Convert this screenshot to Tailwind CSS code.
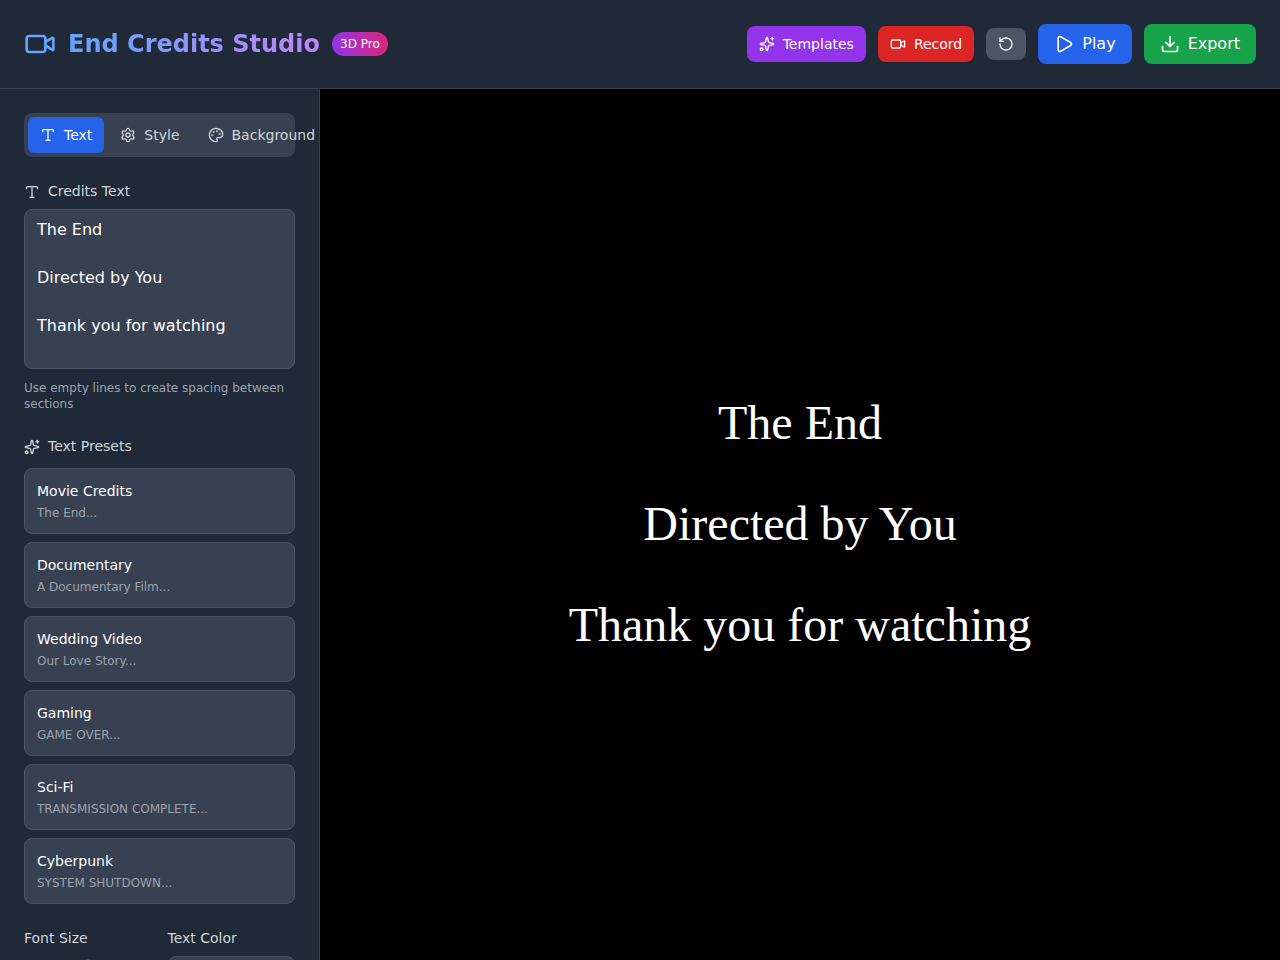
<!DOCTYPE html>
<html lang="en">
<head>
  <meta charset="UTF-8">
  <meta name="viewport" content="width=device-width, initial-scale=1.0">
  <title>End Credits Studio</title>
  <script src="https://cdn.jsdelivr.net/npm/@tailwindcss/browser@4"></script>
</head>
<body class="h-screen flex flex-col overflow-hidden bg-[#111827] text-white font-['DejaVu_Sans',sans-serif]">

  <!-- shared icons -->
  <svg class="hidden" aria-hidden="true">
    <symbol id="icon-video" viewBox="0 0 24 24">
      <path d="m16 13 5.223 3.482a.5.5 0 0 0 .777-.416V7.87a.5.5 0 0 0-.752-.432L16 10.5"/>
      <rect x="2" y="6" width="14" height="12" rx="2"/>
    </symbol>
    <symbol id="icon-sparkles" viewBox="0 0 24 24">
      <path d="M11.017 2.814a1 1 0 0 1 1.966 0l1.051 5.558a2 2 0 0 0 1.594 1.594l5.558 1.051a1 1 0 0 1 0 1.966l-5.558 1.051a2 2 0 0 0-1.594 1.594l-1.051 5.558a1 1 0 0 1-1.966 0l-1.051-5.558a2 2 0 0 0-1.594-1.594l-5.558-1.051a1 1 0 0 1 0-1.966l5.558-1.051a2 2 0 0 0 1.594-1.594z"/>
      <path d="M20 2v4"/>
      <path d="M22 4h-4"/>
      <circle cx="4" cy="20" r="2"/>
    </symbol>
    <symbol id="icon-type" viewBox="0 0 24 24">
      <path d="M12 4v16"/>
      <path d="M4 7V5a1 1 0 0 1 1-1h14a1 1 0 0 1 1 1v2"/>
      <path d="M9 20h6"/>
    </symbol>
  </svg>

  <!-- Header -->
  <header class="flex items-center justify-between p-6 bg-[#1f2937] border-b border-[#374151]">
    <div class="flex items-center gap-3">
      <svg class="w-8 h-8 text-[#60a5fa]" fill="none" stroke="currentColor" stroke-width="2" stroke-linecap="round" stroke-linejoin="round"><use href="#icon-video"/></svg>
      <h1 class="text-2xl font-bold bg-linear-to-r/srgb from-[#60a5fa] to-[#c084fc] bg-clip-text text-transparent">End Credits Studio</h1>
      <span class="px-2 py-1 rounded-full text-xs bg-linear-to-r/srgb from-[#9333ea] to-[#db2777]">3D Pro</span>
    </div>

    <div class="flex items-center gap-3">
      <button type="button" class="flex items-center gap-2 px-3 py-2 rounded-lg text-sm bg-[#9333ea] hover:bg-[#7e22ce]">
        <svg class="w-4 h-4" fill="none" stroke="currentColor" stroke-width="2" stroke-linecap="round" stroke-linejoin="round"><use href="#icon-sparkles"/></svg>
        Templates
      </button>
      <button type="button" class="flex items-center gap-2 px-3 py-2 rounded-lg text-sm bg-[#dc2626] hover:bg-[#b91c1c]">
        <svg class="w-4 h-4" fill="none" stroke="currentColor" stroke-width="2" stroke-linecap="round" stroke-linejoin="round"><use href="#icon-video"/></svg>
        Record
      </button>
      <button type="button" aria-label="Reset" class="px-3 py-2 rounded-lg bg-[#4b5563] hover:bg-[#374151]">
        <svg class="w-4 h-4" viewBox="0 0 24 24" fill="none" stroke="currentColor" stroke-width="2" stroke-linecap="round" stroke-linejoin="round">
          <path d="M3 12a9 9 0 1 0 9-9 9.75 9.75 0 0 0-6.74 2.74L3 8"/>
          <path d="M3 3v5h5"/>
        </svg>
      </button>
      <button type="button" class="flex items-center gap-2 px-4 py-2 rounded-lg bg-[#2563eb] hover:bg-[#1d4ed8]">
        <svg class="w-5 h-5" viewBox="0 0 24 24" fill="none" stroke="currentColor" stroke-width="2" stroke-linecap="round" stroke-linejoin="round">
          <path d="M5 5a2 2 0 0 1 3.008-1.728l11.997 6.998a2 2 0 0 1 .003 3.458l-12 7A2 2 0 0 1 5 19z"/>
        </svg>
        Play
      </button>
      <button type="button" class="flex items-center gap-2 px-4 py-2 rounded-lg bg-[#16a34a] hover:bg-[#15803d]">
        <svg class="w-5 h-5" viewBox="0 0 24 24" fill="none" stroke="currentColor" stroke-width="2" stroke-linecap="round" stroke-linejoin="round">
          <path d="M12 15V3"/>
          <path d="M21 15v4a2 2 0 0 1-2 2H5a2 2 0 0 1-2-2v-4"/>
          <path d="m7 10 5 5 5-5"/>
        </svg>
        Export
      </button>
    </div>
  </header>

  <div class="flex flex-1 min-h-0">
    <!-- Sidebar -->
    <aside class="w-80 shrink-0 p-6 space-y-6 bg-[#1f2937] border-r border-[#374151] overflow-x-hidden overflow-y-auto [scrollbar-width:none]">
      <nav class="flex gap-1 p-1 rounded-lg bg-[#374151] text-sm text-[#d1d5db]">
        <button type="button" class="flex flex-1 items-center gap-2 px-3 py-2 rounded-md bg-[#2563eb] text-white">
          <svg class="w-4 h-4 shrink-0" fill="none" stroke="currentColor" stroke-width="2" stroke-linecap="round" stroke-linejoin="round"><use href="#icon-type"/></svg>
          Text
        </button>
        <button type="button" class="flex flex-1 items-center gap-2 px-3 py-2 rounded-md hover:text-white">
          <svg class="w-4 h-4 shrink-0" viewBox="0 0 24 24" fill="none" stroke="currentColor" stroke-width="2" stroke-linecap="round" stroke-linejoin="round">
            <path d="M9.671 4.136a2.34 2.34 0 0 1 4.659 0 2.34 2.34 0 0 0 3.319 1.915 2.34 2.34 0 0 1 2.33 4.033 2.34 2.34 0 0 0 0 3.831 2.34 2.34 0 0 1-2.33 4.033 2.34 2.34 0 0 0-3.319 1.915 2.34 2.34 0 0 1-4.659 0 2.34 2.34 0 0 0-3.32-1.915 2.34 2.34 0 0 1-2.33-4.033 2.34 2.34 0 0 0 0-3.831A2.34 2.34 0 0 1 6.35 6.051a2.34 2.34 0 0 0 3.319-1.915"/>
            <circle cx="12" cy="12" r="3"/>
          </svg>
          Style
        </button>
        <button type="button" class="flex flex-1 items-center gap-2 px-3 py-2 rounded-md hover:text-white">
          <svg class="w-4 h-4 shrink-0" viewBox="0 0 24 24" fill="none" stroke="currentColor" stroke-width="2" stroke-linecap="round" stroke-linejoin="round">
            <path d="M12 22a1 1 0 0 1 0-20 10 9 0 0 1 10 9 5 5 0 0 1-5 5h-2.25a1.75 1.75 0 0 0-1.4 2.8l.3.4a1.75 1.75 0 0 1-1.4 2.8z"/>
            <circle cx="13.5" cy="6.5" r=".5" fill="currentColor"/>
            <circle cx="17.5" cy="10.5" r=".5" fill="currentColor"/>
            <circle cx="6.5" cy="12.5" r=".5" fill="currentColor"/>
            <circle cx="8.5" cy="7.5" r=".5" fill="currentColor"/>
          </svg>
          Background
        </button>
      </nav>

      <div>
        <label for="credits" class="block mb-2 text-sm text-[#d1d5db]"><svg class="inline w-4 h-4 mr-2" fill="none" stroke="currentColor" stroke-width="2" stroke-linecap="round" stroke-linejoin="round"><use href="#icon-type"/></svg>Credits Text</label>
        <textarea id="credits" class="w-full h-40 px-3 py-2 rounded-lg bg-[#374151] border border-[#4b5563] text-white resize-none">The End

Directed by You

Thank you for watching</textarea>
        <p class="mt-1 text-xs text-[#9ca3af]">Use empty lines to create spacing between sections</p>
      </div>

      <div>
        <h2 class="mb-3 text-sm text-[#d1d5db]"><svg class="inline w-4 h-4 mr-2" fill="none" stroke="currentColor" stroke-width="2" stroke-linecap="round" stroke-linejoin="round"><use href="#icon-sparkles"/></svg>Text Presets</h2>
        <div id="presets" class="grid gap-2"></div>
      </div>

      <div class="grid grid-cols-2 gap-4">
        <div>
          <label for="font-size" class="block mb-2 text-sm text-[#d1d5db]">Font Size</label>
          <input type="range" id="font-size" min="24" max="72" value="48" class="block w-full h-[22px] accent-[#3b82f6]">
        </div>
        <div>
          <label for="text-color" class="block mb-2 text-sm text-[#d1d5db]">Text Color</label>
          <input type="color" id="text-color" value="#ffffff" class="w-full h-10 rounded-lg bg-[#374151] border border-[#4b5563]">
        </div>
      </div>
    </aside>

    <!-- Preview -->
    <main id="preview" class="flex flex-1 flex-col items-center justify-center bg-black text-center text-5xl leading-[2.1] font-['Liberation_Serif',serif]"></main>
  </div>

  <script>
    const presets = [
      { name: 'Movie Credits', text: 'The End' },
      { name: 'Documentary', text: 'A Documentary Film' },
      { name: 'Wedding Video', text: 'Our Love Story' },
      { name: 'Gaming', text: 'GAME OVER' },
      { name: 'Sci-Fi', text: 'TRANSMISSION COMPLETE' },
      { name: 'Cyberpunk', text: 'SYSTEM SHUTDOWN' }
    ];
    const credits = document.getElementById('credits');
    const preview = document.getElementById('preview');

    function renderPreview() {
      preview.innerHTML = '';
      credits.value.split('\n').filter(line => line.trim()).forEach(line => {
        const p = document.createElement('p');
        p.textContent = line;
        preview.appendChild(p);
      });
    }

    presets.forEach(preset => {
      const button = document.createElement('button');
      button.type = 'button';
      button.className = 'p-3 rounded-lg text-left bg-[#374151] border border-[#4b5563] hover:bg-[#4b5563]';
      button.innerHTML = `
        <div class="text-sm text-white">${preset.name}</div>
        <div class="mt-1 text-xs text-[#9ca3af]">${preset.text}...</div>`;
      button.onclick = () => {
        credits.value = preset.text;
        renderPreview();
      };
      document.getElementById('presets').appendChild(button);
    });

    credits.addEventListener('input', renderPreview);
    renderPreview();
  </script>
</body>
</html>
